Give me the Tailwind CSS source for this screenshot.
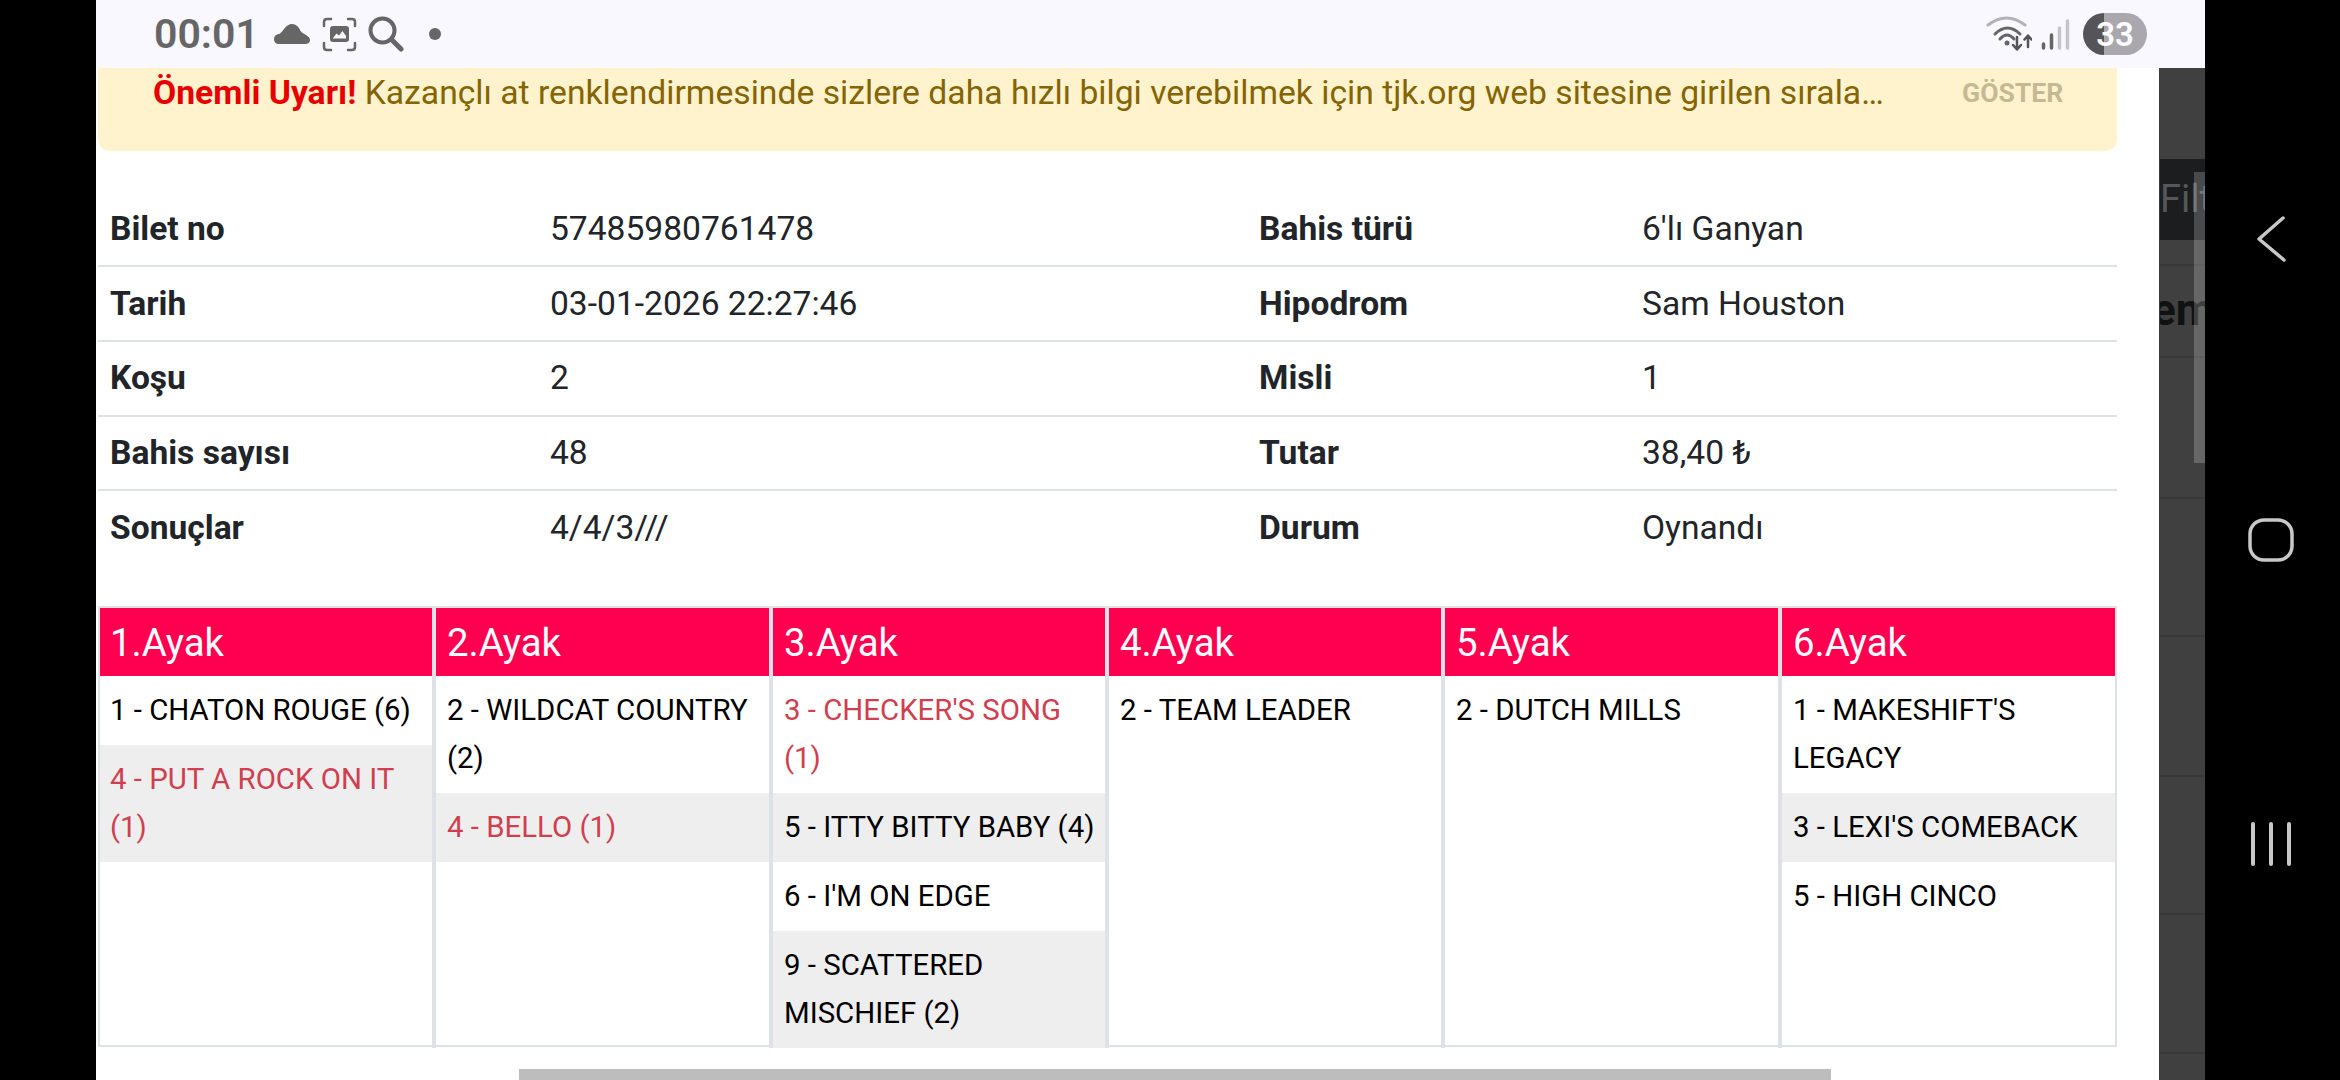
<!DOCTYPE html>
<html lang="tr">
<head>
    <meta charset="UTF-8">
    <title>Bilet detay</title>
    <script src="https://cdn.jsdelivr.net/npm/@tailwindcss/browser@4"></script>
</head>
<body class="bg-black font-['Roboto',sans-serif]">
<div class="flex w-[2340px] h-[1080px] overflow-hidden bg-black">
    <div class="w-[96px] shrink-0 bg-black"></div>

    <div class="w-[2109px] shrink-0 flex flex-col">
        <!-- Status bar -->
        <div class="h-[68px] shrink-0 bg-[#f8f8fe] flex items-center pl-[58px] pr-[58px]">
            <span class="w-[104px] text-[41px] font-semibold text-[#666666] leading-none">00:01</span>
            <svg class="ml-[16px] mt-[-1px]" width="36" height="20" viewBox="0 0 36 20"><path d="M5 20C2 20 0 18 0 15C0 12 2 10.500 5 10C7 9 8 7.500 10 5C12 2 15 0 18 0C22 0 25 3 26.500 7C28 9 30 9.500 32 11C34.500 12.500 36 14 36 16C36 18.500 34 20 31 20Z" fill="#666666"/></svg>
            <svg class="ml-[12px]" width="35" height="35" viewBox="0 0 35 35" fill="none"><path d="M9 2H5C3 2 2 3 2 5V9M26 2H30C32 2 33 3 33 5V9M2 26V30C2 32 3 33 5 33H9M33 26V30C33 32 32 33 30 33H26" stroke="#666666" stroke-width="2.500" stroke-linecap="round"/><rect x="8" y="9" width="19" height="16" rx="3" fill="#666666"/><path d="M11 21L14.500 16.500L17 18.500L20.500 14L24 19V21.500H11Z" fill="#f8f8fe"/></svg>
            <svg class="ml-[11px]" width="36" height="36" viewBox="0 0 36 36" fill="none"><circle cx="14.500" cy="14.500" r="12" stroke="#666666" stroke-width="4"/><path d="M23.500 23.500L33 33" stroke="#666666" stroke-width="5" stroke-linecap="round"/></svg>
            <span class="ml-[25px] w-[12px] h-[12px] rounded-full bg-[#666666]"></span>
            <div class="flex-1"></div>
            <svg width="46" height="36" viewBox="0 0 46 36" fill="none">
                <path d="M2 9Q20.500 -5 39 9" stroke="#b3b2b8" stroke-width="3" stroke-linecap="round"/>
                <path d="M9 18Q21.500 6 34 18" stroke="#666666" stroke-width="3" stroke-linecap="round"/>
                <path d="M14 23Q21 15 28 23" stroke="#666666" stroke-width="3" stroke-linecap="round"/>
                <circle cx="21" cy="27" r="2.500" fill="#666666"/>
                <path d="M31 21V33M27 29L31 33.500L35 29" stroke="#555555" stroke-width="2.500" stroke-linecap="round" stroke-linejoin="round"/>
                <path d="M42 31V20M38.500 23.500L42 19.500L45.500 23.500" stroke="#555555" stroke-width="2.500" stroke-linecap="round" stroke-linejoin="round"/>
            </svg>
            <svg class="ml-[9px]" width="29" height="32" viewBox="0 0 29 32" fill="none">
                <path d="M2.500 26V30" stroke="#666666" stroke-width="3.500" stroke-linecap="round"/>
                <path d="M10.500 17V30" stroke="#666666" stroke-width="3.500" stroke-linecap="round"/>
                <path d="M18.500 10V30" stroke="#c5c4ca" stroke-width="3.500" stroke-linecap="round"/>
                <path d="M26.500 3V30" stroke="#c5c4ca" stroke-width="3.500" stroke-linecap="round"/>
            </svg>
            <div class="ml-[13px] w-[64px] h-[42px] rounded-full overflow-hidden flex items-center justify-center bg-[linear-gradient(90deg,#555558_0,#555558_33%,#aaa8ae_33%,#aaa8ae_100%)]">
                <span class="text-[33px] font-semibold text-white leading-none">33</span>
            </div>
        </div>

        <div class="flex flex-1 min-h-0">
            <!-- Page content -->
            <div class="w-[2063px] shrink-0 bg-white pl-[2px] relative">
                <div class="w-[2019px] h-[83px] bg-[#fff3cd] rounded-b-[12px] flex pl-[55px] pt-[1px]">
                    <p class="w-[1735px] truncate text-[33.7px] leading-[47px] text-[#856404]"><b class="font-bold text-[#e60000]">Önemli Uyarı!</b> Kazançlı at renklendirmesinde sizlere daha hızlı bilgi verebilmek için tjk.org web sitesine girilen sıralamaya göre</p>
                    <span class="ml-[74px] text-[26.6px] leading-[47px] font-bold text-[#c5b994]">GÖSTER</span>
                </div>

                <!-- Ticket info -->
                <div class="w-[2019px] mt-[41px] text-[33.6px] text-[#212529]">
                    <div class="grid grid-cols-[440px_709px_383px_1fr] pl-[12px] pt-[1px] h-[75px] items-center border-b-2 border-[#dee2e6]">
                        <b class="font-bold">Bilet no</b><span>57485980761478</span><b class="font-bold">Bahis türü</b><span>6'lı Ganyan</span>
                    </div>
                    <div class="grid grid-cols-[440px_709px_383px_1fr] pl-[12px] pt-[1px] h-[75px] items-center border-b-2 border-[#dee2e6]">
                        <b class="font-bold">Tarih</b><span>03-01-2026 22:27:46</span><b class="font-bold">Hipodrom</b><span>Sam Houston</span>
                    </div>
                    <div class="grid grid-cols-[440px_709px_383px_1fr] pl-[12px] h-[75px] items-center border-b-2 border-[#dee2e6]">
                        <b class="font-bold">Koşu</b><span>2</span><b class="font-bold">Misli</b><span>1</span>
                    </div>
                    <div class="grid grid-cols-[440px_709px_383px_1fr] pl-[12px] h-[74px] items-center border-b-2 border-[#dee2e6]">
                        <b class="font-bold">Bahis sayısı</b><span>48</span><b class="font-bold">Tutar</b><span>38,40 ₺</span>
                    </div>
                    <div class="grid grid-cols-[440px_709px_383px_1fr] pl-[12px] h-[75px] items-center">
                        <b class="font-bold">Sonuçlar</b><span>4/4/3///</span><b class="font-bold">Durum</b><span>Oynandı</span>
                    </div>
                </div>

                <!-- Legs -->
                <div class="w-[2019px] h-[441px] mt-[40px] grid grid-cols-[336px_337px_336px_336px_337px_1fr] border-2 border-[#dee2e6] text-[29.4px] leading-[48px] text-black">
                    <div class="flex flex-col min-w-0 border-r-4 border-[#dee2e6]">
                        <div class="h-[68px] bg-[#ff0050] text-white text-[38.4px] leading-[70px] px-[10px]">1.Ayak</div>
                        <div class="px-[10px] pt-[10px] pb-[11px]">1 - CHATON ROUGE (6)</div>
                        <div class="px-[10px] pt-[10px] pb-[11px] bg-[#eeeeee] text-[#cf3f50]">4 - PUT A ROCK ON IT (1)</div>
                    </div>
                    <div class="flex flex-col min-w-0 border-r-4 border-[#dee2e6]">
                        <div class="h-[68px] bg-[#ff0050] text-white text-[38.4px] leading-[70px] px-[11px]">2.Ayak</div>
                        <div class="px-[11px] pt-[10px] pb-[11px]">2 - WILDCAT COUNTRY (2)</div>
                        <div class="px-[11px] pt-[10px] pb-[11px] bg-[#eeeeee] text-[#cf3f50]">4 - BELLO (1)</div>
                    </div>
                    <div class="flex flex-col min-w-0 border-r-4 border-[#dee2e6]">
                        <div class="h-[68px] bg-[#ff0050] text-white text-[38.4px] leading-[70px] px-[11px]">3.Ayak</div>
                        <div class="px-[11px] pt-[10px] pb-[11px] text-[#cf3f50]">3 - CHECKER'S SONG (1)</div>
                        <div class="pl-[11px] pr-[4px] pt-[10px] pb-[11px] bg-[#eeeeee]">5 - ITTY BITTY BABY (4)</div>
                        <div class="px-[11px] pt-[10px] pb-[11px]">6 - I'M ON EDGE</div>
                        <div class="px-[11px] pt-[10px] pb-[11px] bg-[#eeeeee] flex-1">9 - SCATTERED MISCHIEF (2)</div>
                    </div>
                    <div class="flex flex-col min-w-0 border-r-4 border-[#dee2e6]">
                        <div class="h-[68px] bg-[#ff0050] text-white text-[38.4px] leading-[70px] px-[11px]">4.Ayak</div>
                        <div class="px-[11px] pt-[10px] pb-[11px]">2 - TEAM LEADER</div>
                    </div>
                    <div class="flex flex-col min-w-0 border-r-4 border-[#dee2e6]">
                        <div class="h-[68px] bg-[#ff0050] text-white text-[38.4px] leading-[70px] px-[11px]">5.Ayak</div>
                        <div class="px-[11px] pt-[10px] pb-[11px]">2 - DUTCH MILLS</div>
                    </div>
                    <div class="flex flex-col min-w-0">
                        <div class="h-[68px] bg-[#ff0050] text-white text-[38.4px] leading-[70px] px-[11px]">6.Ayak</div>
                        <div class="px-[11px] pt-[10px] pb-[11px]">1 - MAKESHIFT'S LEGACY</div>
                        <div class="px-[11px] pt-[10px] pb-[11px] bg-[#eeeeee]">3 - LEXI'S COMEBACK</div>
                        <div class="px-[11px] pt-[10px] pb-[11px]">5 - HIGH CINCO</div>
                    </div>
                </div>

                <!-- Horizontal scrollbar -->
                <div class="absolute left-[423px] top-[1001px] w-[1312px] h-[11px] bg-[#bdbdbd]"></div>
            </div>

            <!-- Dimmed page behind the modal -->
            <div class="w-[46px] shrink-0 bg-[#404040] relative overflow-hidden border-l border-[#3a3a3a]">
                <div class="h-[91px]"></div>
                <div class="h-[81px] bg-[#1c1d1f] overflow-hidden text-[38px] leading-[81px] text-[#55575a] whitespace-nowrap">Filt</div>
                <div class="h-[26px] border-b-2 border-[#393939]"></div>
                <div class="h-[92px] text-[44px] leading-[88px] font-bold text-[#111111] whitespace-nowrap ml-[-8px] border-b-2 border-[#393939]">emo</div>
                <div class="h-[141px] border-b-2 border-[#393939]"></div>
                <div class="h-[138px] border-b-2 border-[#393939]"></div>
                <div class="h-[140px] border-b-2 border-[#393939]"></div>
                <div class="h-[138px] border-b-2 border-[#393939]"></div>
                <div class="h-[139px] border-b-2 border-[#393939]"></div>
                <div class="absolute right-0 top-[104px] w-[11px] h-[291px] bg-white/20"></div>
            </div>
        </div>
    </div>

    <!-- Android nav buttons -->
    <div class="flex-1 flex flex-col items-center pr-[3px]">
        <svg class="mt-[216px]" width="32" height="46" viewBox="0 0 32 46" fill="none"><path d="M28 2L4 23L29 44" stroke="#c8c8c8" stroke-width="3.500" stroke-linecap="round" stroke-linejoin="round"/></svg>
        <svg class="mt-[256px]" width="46" height="44" viewBox="0 0 46 44" fill="none"><rect x="2" y="2" width="42" height="40" rx="14" stroke="#c8c8c8" stroke-width="3.500"/></svg>
        <svg class="mt-[260px]" width="42" height="44" viewBox="0 0 42 44" fill="none"><path d="M3 2V42M21 2V42M39 2V42" stroke="#c8c8c8" stroke-width="4" stroke-linecap="round"/></svg>
    </div>
</div>
</body>
</html>
